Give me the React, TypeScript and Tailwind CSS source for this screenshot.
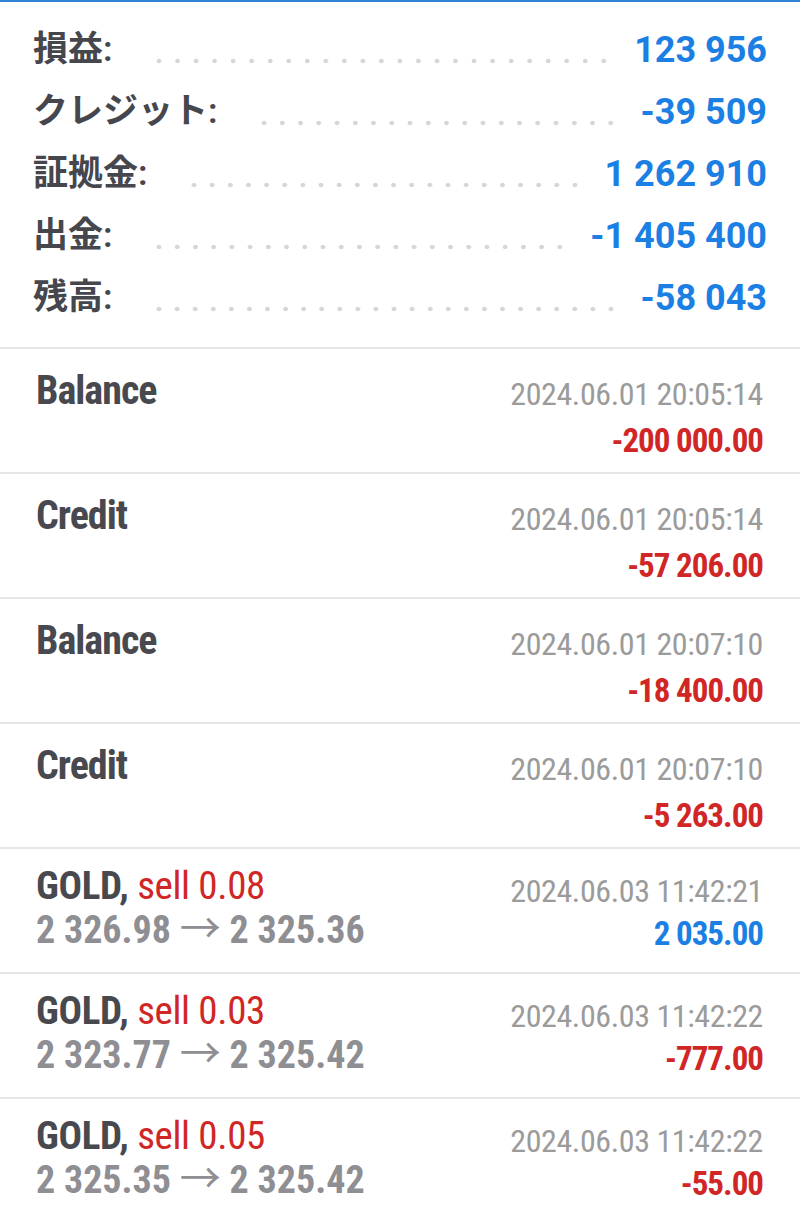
const summary = [
  { label: "損益:", value: "123 956" },
  { label: "クレジット:", value: "-39 509" },
  { label: "証拠金:", value: "1 262 910" },
  { label: "出金:", value: "-1 405 400" },
  { label: "残高:", value: "-58 043" },
];

type Deal =
  | { kind: "op"; title: string; time: string; amount: string; positive: boolean }
  | {
      kind: "trade";
      symbol: string;
      side: string;
      open: string;
      close: string;
      time: string;
      amount: string;
      positive: boolean;
    };

const deals: Deal[] = [
  { kind: "op", title: "Balance", time: "2024.06.01 20:05:14", amount: "-200 000.00", positive: false },
  { kind: "op", title: "Credit", time: "2024.06.01 20:05:14", amount: "-57 206.00", positive: false },
  { kind: "op", title: "Balance", time: "2024.06.01 20:07:10", amount: "-18 400.00", positive: false },
  { kind: "op", title: "Credit", time: "2024.06.01 20:07:10", amount: "-5 263.00", positive: false },
  {
    kind: "trade",
    symbol: "GOLD,",
    side: "sell 0.08",
    open: "2 326.98",
    close: "2 325.36",
    time: "2024.06.03 11:42:21",
    amount: "2 035.00",
    positive: true,
  },
  {
    kind: "trade",
    symbol: "GOLD,",
    side: "sell 0.03",
    open: "2 323.77",
    close: "2 325.42",
    time: "2024.06.03 11:42:22",
    amount: "-777.00",
    positive: false,
  },
  {
    kind: "trade",
    symbol: "GOLD,",
    side: "sell 0.05",
    open: "2 325.35",
    close: "2 325.42",
    time: "2024.06.03 11:42:22",
    amount: "-55.00",
    positive: false,
  },
];

function SummaryRow({ label, value }: { label: string; value: string }) {
  return (
    <div className="flex h-[62px] items-center">
      <span className="text-[35px] leading-[62px] font-semibold text-[#46464d] font-['Roboto','Noto_Sans_CJK_JP',sans-serif]">
        {label}
      </span>
      <div className="ml-[37px] mr-[21px] mt-[22px] h-[6px] flex-1 bg-[radial-gradient(circle,#d6d6d6_2px,transparent_2.6px)] bg-[length:18px_6px] bg-repeat-space" />
      <span className="text-[36px] leading-[62px] font-bold text-[#1b7fe3] font-['Roboto',sans-serif]">
        {value}
      </span>
    </div>
  );
}

function DealRow({ deal }: { deal: Deal }) {
  const amountColor = deal.positive ? "text-[#1b7fe3]" : "text-[#d12626]";
  if (deal.kind === "op") {
    return (
      <div className="flex h-[125px] justify-between border-t-2 border-[#e6e6e6] pl-[36px] pr-[37px]">
        <div className="pt-[18px] text-[40px] leading-[48px] font-bold tracking-[-1px] text-[#48484f]">
          {deal.title}
        </div>
        <div className="flex flex-col items-end pt-[25px]">
          <div className="text-[32px] leading-[40px] tracking-[-0.4px] text-[#9b9b9b]">{deal.time}</div>
          <div className={`mt-[7px] text-[33px] leading-[40px] font-bold tracking-[-1px] ${amountColor}`}>
            {deal.amount}
          </div>
        </div>
      </div>
    );
  }
  return (
    <div className="flex h-[125px] justify-between border-t-2 border-[#e6e6e6] pl-[36px] pr-[37px]">
      <div className="pt-[19px]">
        <div className="text-[39px] leading-[37px] tracking-[-0.35px]">
          <span className="font-bold text-[#48484f]">{deal.symbol}</span>{" "}
          <span className="text-[#d12626]">{deal.side}</span>
        </div>
        <div className="text-[38px] leading-[37px] font-bold text-[#8e8e93]">
          {deal.open}{" "}
          <span className="text-[41px] leading-none font-normal font-['Noto_Sans_CJK_JP',sans-serif]">→</span>{" "}
          {deal.close}
        </div>
      </div>
      <div className="flex flex-col items-end pt-[22px]">
        <div className="text-[32px] leading-[40px] tracking-[-0.4px] text-[#9b9b9b]">{deal.time}</div>
        <div className={`mt-[3px] text-[33px] leading-[40px] font-bold tracking-[-1px] ${amountColor}`}>
          {deal.amount}
        </div>
      </div>
    </div>
  );
}

export default function App() {
  return (
    <div className="min-h-screen bg-white border-t-2 border-[#2f83d6]">
      {/* Account summary */}
      <section className="px-[33px] pt-[17px] pb-[18px]">
        {summary.map((s) => (
          <SummaryRow key={s.label} {...s} />
        ))}
      </section>

      {/* Deals list */}
      <section className="font-['Roboto_Condensed','Roboto',sans-serif] font-stretch-condensed">
        {deals.map((d, i) => (
          <DealRow key={i} deal={d} />
        ))}
      </section>
    </div>
  );
}
